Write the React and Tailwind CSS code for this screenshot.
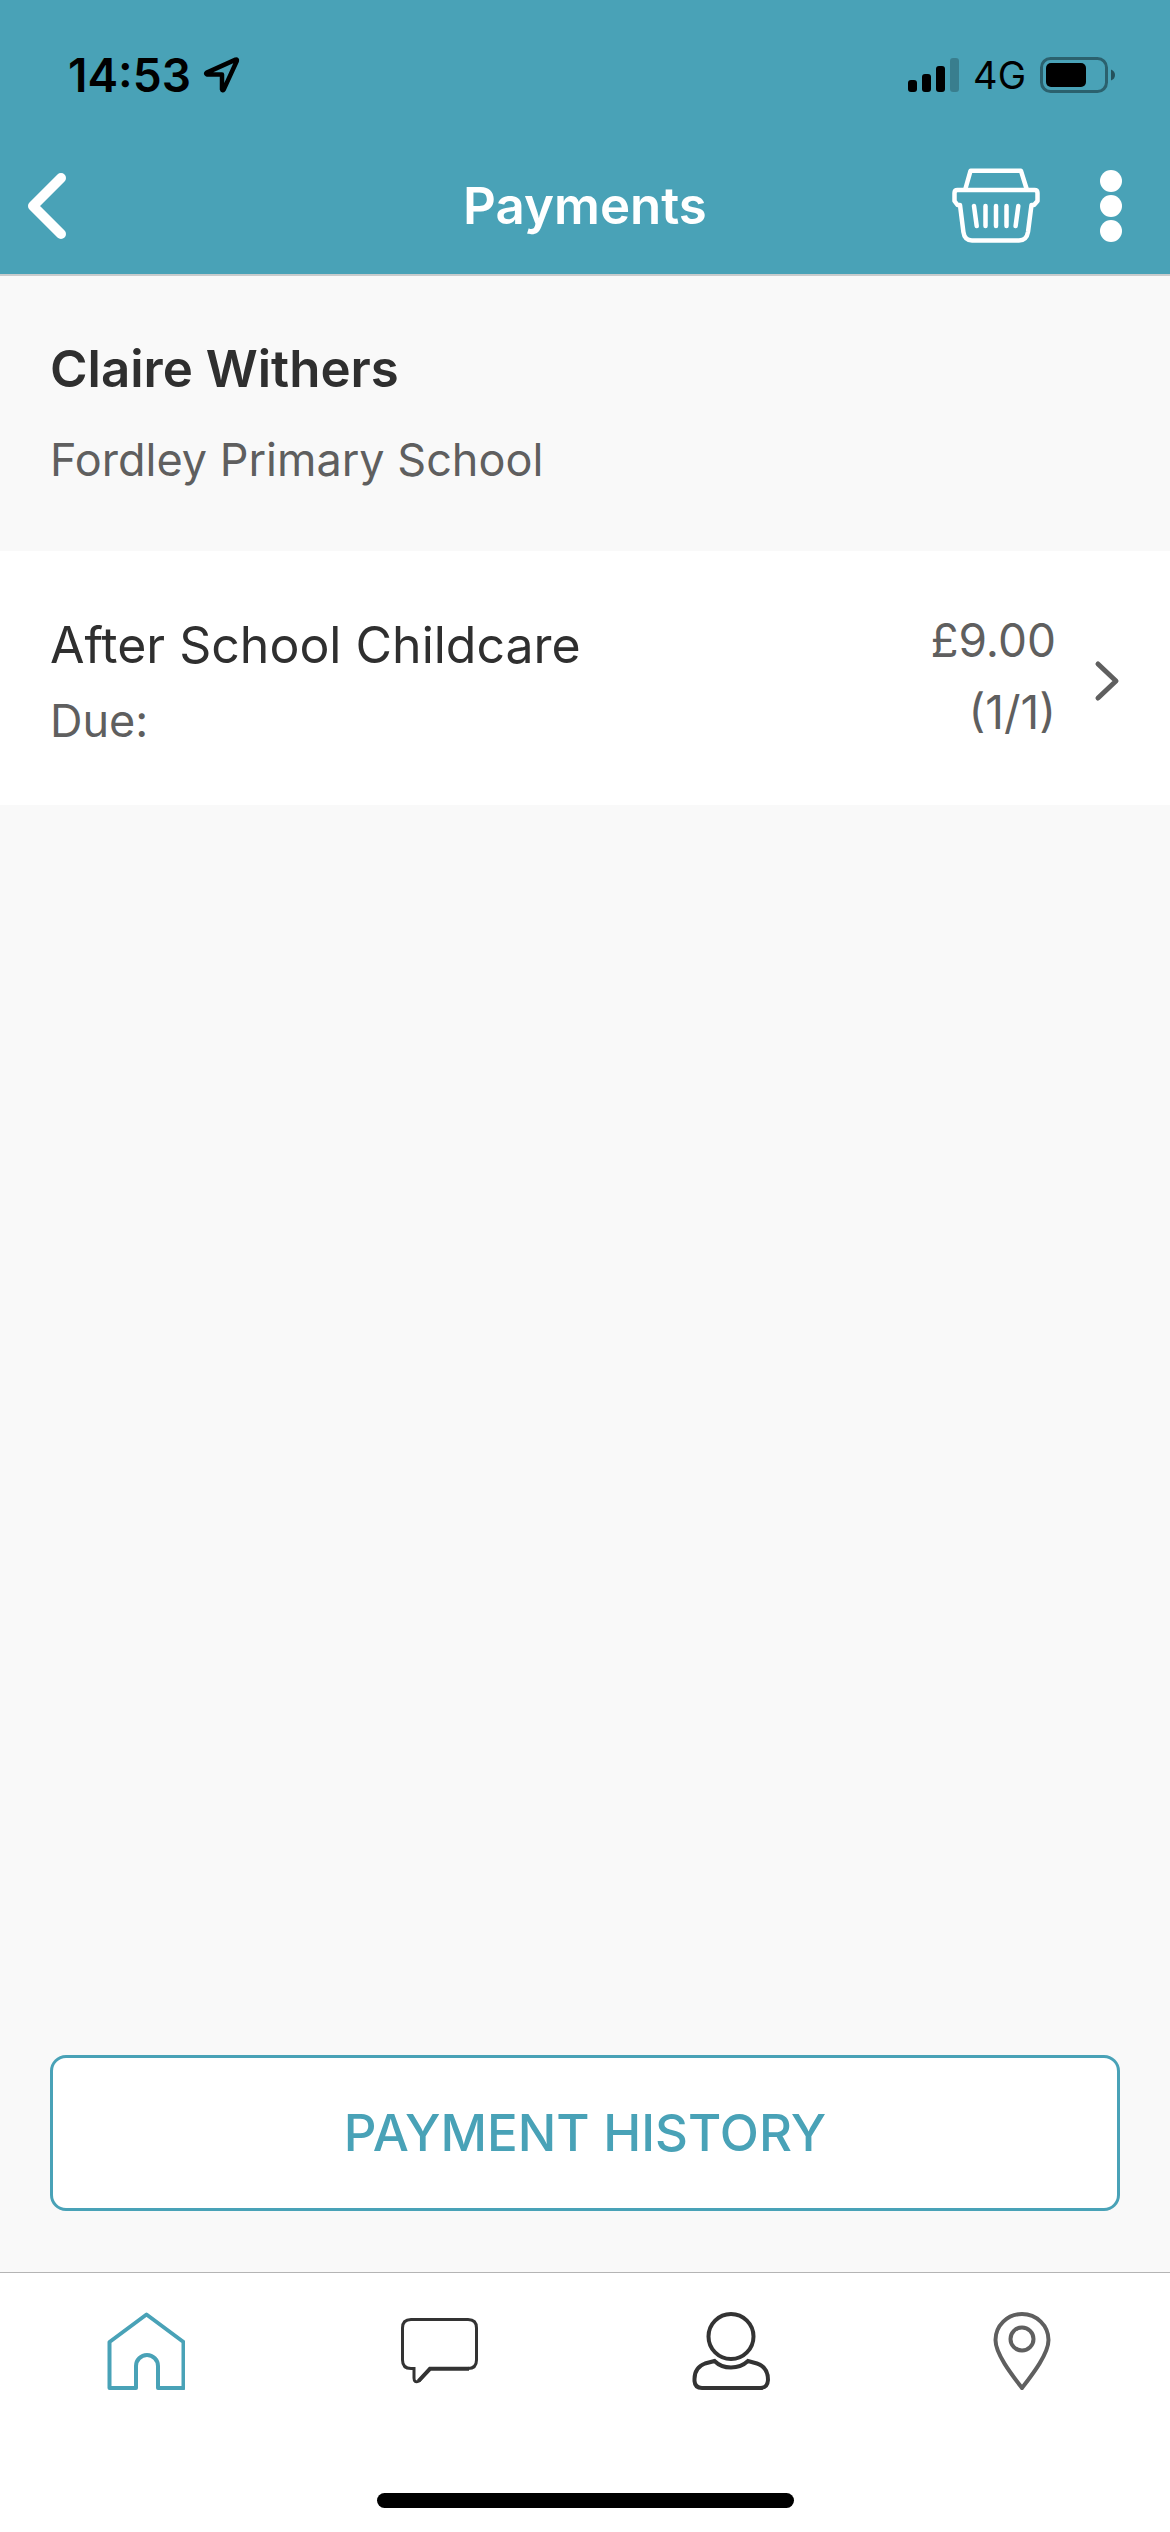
const payments = [
  { id: 1, title: "After School Childcare", due: "", amount: "£9.00", count: "(1/1)" },
];

function StatusBar() {
  return (
    <div className="flex items-center justify-between pt-12 pr-[55px] pl-17 text-black">
      <div className="flex items-center gap-3">
        <span className="text-[46px] leading-[54px] font-semibold">14:53</span>
        <svg width="38" height="38" viewBox="0 0 38 38" fill="none" aria-hidden="true">
          <path
            d="M3.8 16.6 32.6 3.6Q34.4 3.200 33.8 5L20.800 33.400Q19.400 35 19 33.200V18.600L3.800 18.400Q2.400 17.600 3.800 16.600Z"
            stroke="currentColor"
            strokeWidth="4.5"
            strokeLinejoin="round"
          />
        </svg>
      </div>

      <div className="flex items-center gap-3.5">
        <svg width="51" height="34" viewBox="0 0 51 34" fill="currentColor" aria-hidden="true">
          <rect x="0" y="22" width="9" height="12" rx="3" />
          <rect x="14" y="16" width="9" height="18" rx="3" />
          <rect x="28" y="8" width="9" height="26" rx="3" />
          <rect x="42" y="0" width="9" height="34" rx="3" opacity="0.22" />
        </svg>
        <span className="text-[38px] leading-[54px]">4G</span>
        <svg width="75" height="36" viewBox="0 0 75 36" fill="currentColor" aria-hidden="true">
          <rect x="1.5" y="1.5" width="65" height="33" rx="9" fill="none" stroke="currentColor" strokeWidth="3" opacity="0.4" />
          <rect x="6" y="6" width="40" height="24" rx="5" />
          <path d="M71 12.5Q75 14 75 18T71 23.5Z" opacity="0.5" />
        </svg>
      </div>
    </div>
  );
}

function BasketIcon() {
  return (
    <svg width="88" height="75" viewBox="0 0 88 75" fill="none" stroke="currentColor" strokeWidth="4.5" strokeLinecap="round" strokeLinejoin="round">
      <path d="M13.500 20.500 18.500 2.800H69L74.500 20.500" />
      <path d="M5.500 22H82.500Q85.500 22 85.500 25V33L82 37H79.500L76 64Q74.600 72.400 67 72.400H20Q12.600 72.400 11.400 64L8 37H5.500L2.500 33V25Q2.500 22 5.500 22Z" />
      <path d="M22 38 24.700 58M33.500 38V58M44 38V58M54.500 38V58M66.300 38 63.600 58" />
    </svg>
  );
}

function Header() {
  return (
    <header className="border-b-2 border-[#c9cccd] bg-[#49a2b7]">
      <StatusBar />
      <div className="grid grid-cols-[1fr_auto_1fr] items-center px-6 pt-[66px] pb-[31px] text-white">
        <button type="button" aria-label="Back" className="justify-self-start">
          <svg width="44" height="72" viewBox="0 0 44 72" fill="none" stroke="currentColor" strokeWidth="10" strokeLinecap="round" strokeLinejoin="round">
            <path d="M37 8 9 36 37 64" />
          </svg>
        </button>
        <h1 className="text-[51px] leading-[60px] font-semibold">Payments</h1>
        <div className="flex items-center gap-15 justify-self-end pr-6">
          <button type="button" aria-label="Basket">
            <BasketIcon />
          </button>
          <button type="button" aria-label="More options">
            <svg width="22" height="72" viewBox="0 0 22 72" fill="currentColor">
              <circle cx="11" cy="11" r="11" />
              <circle cx="11" cy="36" r="11" />
              <circle cx="11" cy="61" r="11" />
            </svg>
          </button>
        </div>
      </div>
    </header>
  );
}

function PaymentRow({ payment }) {
  return (
    <li>
      <button type="button" className="flex w-full items-start bg-white px-[50px] pt-[53px] pb-[55px] text-left">
        <div className="flex-1 pt-[9px]">
          <p className="text-[50px] leading-[64px] text-[#2f2f2f]">{payment.title}</p>
          <p className="pt-[15px] text-[45px] leading-[58px] text-[#5f5f5f]">Due: {payment.due}</p>
        </div>
        <div className="text-right text-[46px] leading-[72px] text-[#5f5f5f]">
          <p>{payment.amount}</p>
          <p>{payment.count}</p>
        </div>
        <svg className="mt-14 ml-9" width="28" height="42" viewBox="0 0 28 42" fill="none" stroke="#5f5f5f" strokeWidth="5" strokeLinecap="round" strokeLinejoin="round" aria-hidden="true">
          <path d="M6 4 24 21 6 38" />
        </svg>
      </button>
    </li>
  );
}

function TabBar() {
  return (
    <footer className="border-t border-[#b4b4b4] bg-white">
      <nav className="grid grid-cols-4 justify-items-center pt-[39px]">
        <a href="#home" aria-label="Home" className="text-[#49a2b7]">
          <svg width="78" height="78" viewBox="0 0 78 78" fill="none" stroke="currentColor" strokeWidth="4">
            <path d="M2.500 76V30L39.500 2.500 76.500 30V76H51V54A11 11 0 0 0 29 54V76Z" strokeLinejoin="round" />
          </svg>
        </a>
        <a href="#messages" aria-label="Messages" className="text-[#333333]">
          <svg width="78" height="78" viewBox="0 0 78 78" fill="none" stroke="currentColor" strokeWidth="3">
            <path d="M11 7.5H68Q76.5 7.5 76.5 16V48Q76.5 56.5 68 56.5H30L19 69Q14 71.5 14 66V56.5H11Q2.5 56.5 2.5 48V16Q2.5 7.5 11 7.5Z" />
            <path d="M69 56.8H30L18.5 69" strokeWidth="4" />
          </svg>
        </a>
        <a href="#profile" aria-label="Profile" className="text-[#333333]">
          <svg width="78" height="78" viewBox="0 0 78 78" fill="none" stroke="currentColor" strokeWidth="4">
            <circle cx="39" cy="24.5" r="22.5" />
            <path d="M22.5 49 13 51.5Q2.500 55.500 2.500 67V69Q3 76 10 76H68Q75.500 76 76 68Q76 55 65 51.500L56 49Q49 55.500 39 55.500T22.500 49Z" />
          </svg>
        </a>
        <a href="#places" aria-label="Places" className="text-[#5f5f5f]">
          <svg width="78" height="78" viewBox="0 0 78 78" fill="none" stroke="currentColor" strokeWidth="4">
            <path d="M37 76C27 63 10.500 42 10.500 28A26.500 26 0 0 1 63.500 28C63.500 42 47 63 37 76Z" />
            <circle cx="37" cy="27" r="11.500" />
          </svg>
        </a>
      </nav>
      <div className="flex justify-center pt-[103px] pb-6">
        <div className="h-[15px] w-[417px] rounded-full bg-black" />
      </div>
    </footer>
  );
}

export default function App() {
  return (
    <div className="flex min-h-screen flex-col bg-[#f9f9f9] font-['Inter','Liberation_Sans',sans-serif]">
      <Header />

      <main className="flex flex-1 flex-col">
        <section className="px-[50px] pt-[61px] pb-[62px]">
          <h2 className="text-[51px] leading-[64px] font-semibold text-[#2f2f2f]">Claire Withers</h2>
          <p className="pt-[30px] text-[45px] leading-[58px] text-[#5f5f5f]">Fordley Primary School</p>
        </section>

        <ul>
          {payments.map((payment) => (
            <PaymentRow key={payment.id} payment={payment} />
          ))}
        </ul>

        <div className="mt-auto px-[50px] pb-[61px]">
          <button
            type="button"
            className="w-full rounded-2xl border-3 border-[#49a2b7] bg-white py-10 text-[51px] leading-[70px] font-medium text-[#49a2b7]"
          >
            PAYMENT HISTORY
          </button>
        </div>
      </main>

      <TabBar />
    </div>
  );
}
